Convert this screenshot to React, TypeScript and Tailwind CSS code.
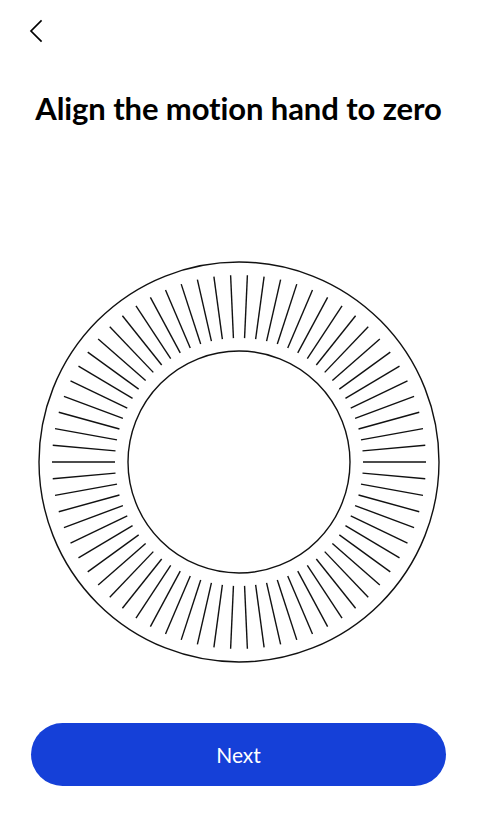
const TICKS = 70;

const Dial = () => {
    const c = 202;
    const ticks = Array.from({ length: TICKS }, (_, i) => {
        const a = ((i + 0.5) * 2 * Math.PI) / TICKS;
        const s = Math.sin(a);
        const k = -Math.cos(a);
        return (
            <line
                key={i}
                x1={c + 124 * s}
                y1={c + 124 * k}
                x2={c + 187 * s}
                y2={c + 187 * k}
                stroke="#111"
                strokeWidth={1.4}
            />
        );
    });
    return (
        <svg width={404} height={404} viewBox="0 0 404 404" className="block">
            <circle cx={c} cy={c} r={200} fill="none" stroke="#111" strokeWidth={1.4} />
            <circle cx={c} cy={c} r={111} fill="none" stroke="#111" strokeWidth={1.4} />
            {ticks}
        </svg>
    );
};

export default function App() {
    return (
        <div className="w-[477px] h-[827px] bg-white flex flex-col" style={{ fontFamily: 'Lato, "Noto Sans", sans-serif' }}>
            {/* Header */}
            <div className="h-[62px] flex items-center pl-[28px]">
                <svg width={16} height={24} viewBox="0 0 16 24" fill="none">
                    <polyline points="13,2 3,12 13,22" stroke="#000" strokeWidth={1.7} strokeLinecap="square" strokeLinejoin="miter" />
                </svg>
            </div>

            <h1 className="mt-[26px] text-center text-[31px] leading-[40px] font-bold text-black tracking-[-0.1px]">
                Align the motion hand to zero
            </h1>

            {/* Dial */}
            <div className="mt-[132px] flex justify-center pl-[1px]">
                <Dial />
            </div>

            {/* Button */}
            <div className="mt-[59px] px-[31px]">
                <button className="w-full h-[63px] rounded-full bg-[#1540d8] text-white text-[21px]">
                    Next
                </button>
            </div>
        </div>
    );
}
